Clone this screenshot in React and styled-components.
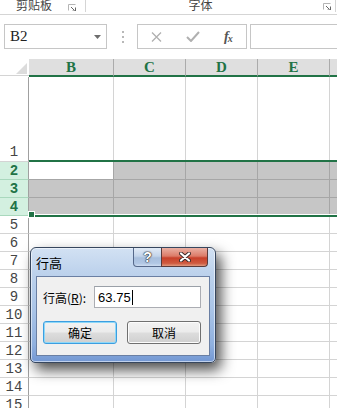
import React from 'react';
import styled, { createGlobalStyle } from 'styled-components';

const GREEN = '#217346';
const GRID = '#d4d4d4';

const GlobalStyle = createGlobalStyle`
  html, body { margin: 0; padding: 0; background: #fff; }
  body { font-family: "Noto Sans CJK SC", "Liberation Sans", sans-serif; }
`;

const Screen = styled.div`
  position: relative;
  width: 337px;
  height: 408px;
  overflow: hidden;
  background: #fff;
`;

/* ribbon strip, cut off at the top */
const Ribbon = styled.div`
  display: flex;
  align-items: flex-start;
  height: 14px;
  border-bottom: 1px solid #d5d5d5;
  overflow: hidden;
`;

const Group = styled.div`
  display: flex;
  align-items: flex-start;
  width: ${p => p.$w}px;
  height: 12px;
  padding-right: ${p => p.$pr}px;
  box-sizing: border-box;
  border-right: 1px solid #d5d5d5;
`;

const GroupLabel = styled.div`
  flex: 1;
  text-align: center;
  font-size: 12px;
  line-height: 12px;
  margin-top: -1px;
  padding-right: ${p => p.$pr || 0}px;
  color: #444;
`;

const Launcher = styled.svg`
  margin-top: ${p => p.$top}px;
  flex: none;
`;

/* name box / formula bar */
const FormulaBar = styled.div`
  display: flex;
  align-items: center;
  height: 25px;
  margin-top: 9px;
  padding-left: 4px;
`;

const NameBox = styled.div`
  display: flex;
  align-items: center;
  justify-content: space-between;
  width: 103px;
  height: 25px;
  box-sizing: border-box;
  border: 1px solid #c6c6c6;
  padding: 0 5px 0 5px;
  font-family: "Liberation Serif", serif;
  font-size: 15px;
  color: #222;
`;

const Dots = styled.div`
  display: flex;
  flex-direction: column;
  gap: 3px;
  margin-left: 15px;
  span {
    width: 2px;
    height: 2px;
    background: #b8b8b8;
  }
`;

const FxBox = styled.div`
  display: flex;
  align-items: center;
  gap: 24px;
  width: 110px;
  height: 25px;
  margin-left: 13px;
  padding-left: 13px;
  box-sizing: border-box;
  border: 1px solid #c6c6c6;
`;

const Fx = styled.span`
  font-family: "Liberation Serif", serif;
  font-style: italic;
  font-weight: bold;
  font-size: 14px;
  color: #555;
  letter-spacing: -1px;
  sub {
    font-size: 10px;
    vertical-align: -1px;
  }
`;

const FormulaInput = styled.div`
  flex: 1;
  height: 25px;
  margin-left: 3px;
  box-sizing: border-box;
  border: 1px solid #c6c6c6;
  border-right: none;
`;

/* worksheet grid */
const Sheet = styled.div`
  position: relative;
  display: grid;
  grid-template-columns: 29px 85px 72px 72px 72px 72px;
  grid-template-rows: 18px 85px repeat(14, 18px);
  margin-top: 10px;
`;

const Corner = styled.div`
  display: flex;
  align-items: flex-end;
  justify-content: flex-end;
  padding: 0 2px 1px 0;
  box-sizing: border-box;
  border-bottom: 1px solid ${GRID};
  margin-bottom: 1px;
  background: #fff;
`;

const ColHead = styled.div`
  display: flex;
  align-items: center;
  justify-content: center;
  box-sizing: border-box;
  background: #dfdfdf;
  border-right: 1px solid #ababab;
  border-bottom: 2px solid ${GREEN};
  font-family: "Liberation Serif", serif;
  font-weight: bold;
  font-size: 15px;
  color: ${GREEN};
  padding-top: 1px;
`;

const RowHead = styled.div`
  display: flex;
  align-items: ${p => (p.$bottom ? 'flex-end' : 'center')};
  justify-content: center;
  box-sizing: border-box;
  border-right: 1px solid #a0a0a0;
  border-bottom: 1px solid ${p => (p.$sel ? '#a9d8bd' : GRID)};
  background: ${p => (p.$sel ? '#d3f0e0' : '#fff')};
  color: ${p => (p.$sel ? GREEN : '#444')};
  font-family: "Liberation Mono", monospace;
  font-weight: ${p => (p.$sel ? 'bold' : 'normal')};
  font-size: 14px;
  line-height: 16px;
  padding-bottom: ${p => (p.$bottom ? 1 : 0)}px;
`;

const Cell = styled.div`
  box-sizing: border-box;
  border-right: 1px solid ${p => (p.$sel ? '#a6a6a6' : GRID)};
  border-bottom: 1px solid ${p => (p.$sel ? '#a6a6a6' : GRID)};
  background: ${p => (p.$sel && !p.$active ? '#c6c6c6' : '#fff')};
`;

const SelFrame = styled.div`
  position: absolute;
  top: 101px;
  left: 29px;
  right: 0;
  height: 57px;
  box-sizing: border-box;
  border-top: 2px solid ${GREEN};
  border-bottom: 2px solid ${GREEN};
  box-shadow: inset 0 -1px 0 #fff;
  pointer-events: none;
`;

const FillHandle = styled.div`
  position: absolute;
  top: 152px;
  left: 28px;
  width: 5px;
  height: 5px;
  background: ${GREEN};
  border: 1px solid #fff;
`;

/* the dialog */
const Dialog = styled.div`
  position: absolute;
  left: 30px;
  top: 247px;
  width: 186px;
  height: 116px;
  box-sizing: border-box;
  display: flex;
  flex-direction: column;
  padding: 0 5px 6px 5px;
  border: 1px solid #36465e;
  border-radius: 6px 6px 5px 5px;
  background: linear-gradient(180deg, #d2e1f3 0%, #bdd2ec 22%, #a9c4e7 55%, #8fb0df 85%, #7397d3 100%);
  box-shadow: inset 0 0 0 1px rgba(255, 255, 255, 0.55), 5px 7px 14px rgba(0, 0, 0, 0.7);
`;

const TitleBar = styled.div`
  display: flex;
  align-items: center;
  height: 28px;
  flex: none;
`;

const Title = styled.div`
  font-size: 13px;
  color: #000;
  margin-top: 1px;
`;

const Caption = styled.div`
  display: flex;
  align-self: flex-start;
  margin-left: auto;
  margin-right: 2px;
`;

const CapBtn = styled.div`
  display: flex;
  align-items: center;
  justify-content: center;
  width: ${p => p.$w}px;
  height: 19px;
  box-sizing: border-box;
  border: 1px solid ${p => (p.$close ? '#5a3a3a' : '#55688a')};
  border-top: none;
  border-radius: ${p => (p.$close ? '0 0 4px 0' : '0 0 0 4px')};
  margin-left: ${p => (p.$close ? -1 : 0)}px;
  background: ${p =>
    p.$close
      ? 'linear-gradient(180deg, #eab0a3 0%, #dc7b68 45%, #c8402a 55%, #cf5a40 85%, #e09a80 100%)'
      : 'linear-gradient(180deg, #e2ebf6 0%, #c3d4ea 45%, #a8bfdd 55%, #b1c7e4 85%, #cddcf0 100%)'};
  color: #fff;
  font-family: "Liberation Sans", sans-serif;
  font-weight: bold;
  font-size: 14px;
  text-shadow: 0 0 1px #222, 0 0 1px #222, 0 0 2px #333;
`;

const Client = styled.div`
  flex: 1;
  display: flex;
  flex-direction: column;
  padding: 9px 0 0 6px;
  border: 1px solid #6a7fa3;
  background: #f0f0f0;
`;

const FieldRow = styled.div`
  display: flex;
  align-items: center;
  gap: 8px;
`;

const Label = styled.label`
  font-size: 12px;
  color: #000;
  u { text-decoration: underline; }
`;

const Input = styled.div`
  display: flex;
  align-items: center;
  width: 107px;
  height: 22px;
  box-sizing: border-box;
  padding-left: 3px;
  border: 1px solid #abadb3;
  border-top-color: #9aa0a8;
  background: #fff;
  font-family: "Liberation Sans", sans-serif;
  font-size: 13px;
  color: #000;
`;

const Caret = styled.span`
  width: 1px;
  height: 15px;
  margin-left: 1px;
  background: #000;
`;

const ButtonRow = styled.div`
  display: flex;
  gap: 10px;
  margin-top: 13px;
`;

const Btn = styled.button`
  width: 74px;
  height: 23px;
  box-sizing: border-box;
  padding: 0;
  border: 1px solid ${p => (p.$default ? '#3c9ee0' : '#707070')};
  border-radius: 3px;
  background: linear-gradient(180deg, #f2f2f2 0%, #ebebeb 48%, #dddddd 52%, #cfcfcf 100%);
  box-shadow: ${p => (p.$default ? 'inset 0 0 0 1px #8ed8f8' : 'inset 0 0 0 1px #fcfcfc')};
  font-family: "Noto Sans CJK SC", sans-serif;
  font-size: 12px;
  color: #000;
`;

const LauncherIcon = ({ top }) => (
  <Launcher $top={top} width="8" height="7" viewBox="0 0 8 7">
    <path d="M0.5 6.5V0.5H7.5" stroke="#b5b5b5" fill="none" />
    <path d="M3 3L6.5 6.5M7.5 3.5v3.5H4.5" stroke="#666" fill="none" />
  </Launcher>
);

// F is only a sliver at the right edge, its letter falls outside the window
const cols = [
  { id: 'B', label: 'B' },
  { id: 'C', label: 'C' },
  { id: 'D', label: 'D' },
  { id: 'E', label: 'E' },
  { id: 'F', label: '' },
];
const rows = Array.from({ length: 15 }, (_, i) => i + 1);

export default function App() {
  return (
    <Screen>
      <GlobalStyle />
      <Ribbon>
        <Group $w={86} $pr={9}>
          <GroupLabel>剪贴板</GroupLabel>
          <LauncherIcon top={4} />
        </Group>
        <Group $w={250} $pr={4}>
          <GroupLabel $pr={8}>字体</GroupLabel>
          <LauncherIcon top={3} />
        </Group>
      </Ribbon>

      <FormulaBar>
        <NameBox>
          B2
          <svg width="7" height="4" viewBox="0 0 7 4">
            <path d="M0 0h7L3.5 4z" fill="#6d6d6d" />
          </svg>
        </NameBox>
        <Dots><span /><span /><span /></Dots>
        <FxBox>
          <svg width="11" height="10" viewBox="0 0 11 10">
            <path d="M1 0.5L10 9.5M10 0.5L1 9.5" stroke="#b0b0b0" strokeWidth="1.3" />
          </svg>
          <svg width="14" height="11" viewBox="0 0 14 11">
            <path d="M1 6L5 10L13 1" stroke="#b0b0b0" strokeWidth="2" fill="none" />
          </svg>
          <Fx>f<sub>x</sub></Fx>
        </FxBox>
        <FormulaInput />
      </FormulaBar>

      <Sheet>
        <Corner>
          <svg width="11" height="11" viewBox="0 0 11 11">
            <path d="M11 0V11H0z" fill="#dcdcdc" />
          </svg>
        </Corner>
        {cols.map(c => (
          <ColHead key={c.id}>{c.label}</ColHead>
        ))}
        {rows.map(r => {
          const sel = r >= 2 && r <= 4;
          return (
            <React.Fragment key={r}>
              <RowHead $sel={sel} $bottom={r === 1}>{r}</RowHead>
              {cols.map(c => (
                <Cell key={c.id} $sel={sel} $active={r === 2 && c.id === 'B'} />
              ))}
            </React.Fragment>
          );
        })}
        <SelFrame />
        <FillHandle />
      </Sheet>

      <Dialog>
        <TitleBar>
          <Title>行高</Title>
          <Caption>
            <CapBtn $w={29}>?</CapBtn>
            <CapBtn $w={47} $close>
              <svg width="12" height="10" viewBox="0 0 12 10">
                <path d="M2 1.5L10 8.5M10 1.5L2 8.5" stroke="#3a2a2a" strokeWidth="4" strokeLinecap="round" />
                <path d="M2 1.5L10 8.5M10 1.5L2 8.5" stroke="#fff" strokeWidth="2.2" strokeLinecap="round" />
              </svg>
            </CapBtn>
          </Caption>
        </TitleBar>
        <Client>
          <FieldRow>
            <Label>行高(<u>R</u>):</Label>
            <Input>63.75<Caret /></Input>
          </FieldRow>
          <ButtonRow>
            <Btn $default>确定</Btn>
            <Btn>取消</Btn>
          </ButtonRow>
        </Client>
      </Dialog>
    </Screen>
  );
}
